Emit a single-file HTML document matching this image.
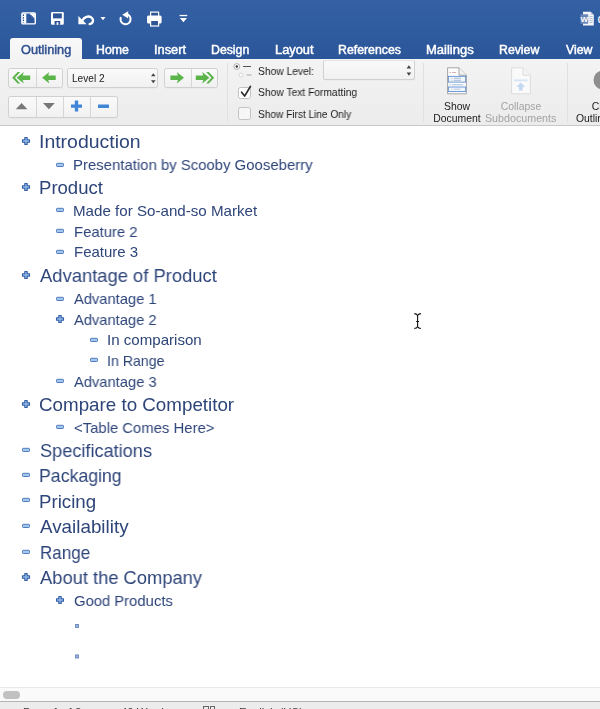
<!DOCTYPE html>
<html><head><meta charset="utf-8">
<style>
*{box-sizing:border-box;margin:0;padding:0}
html,body{width:600px;height:709px;overflow:hidden;background:#fff}
body{position:relative;font-family:"Liberation Sans",sans-serif;}
.abs{position:absolute}
#title{left:0;top:0;width:600px;height:59px;background:linear-gradient(#3561a4 0,#2f5b9f 30px,#2b5699 59px)}
.tab{position:absolute;top:40.500px;height:19px;line-height:19px;font-size:12px;-webkit-text-stroke:0.450px #fff;color:#fff;transform:scaleX(1.025);white-space:nowrap;transform-origin:0 50%;will-change:transform}
#tabsel{left:10px;top:38px;width:72px;height:22px;background:linear-gradient(#f8f8f8,#f3f3f3);border-radius:3px 3px 0 0}
#tabsel span{will-change:transform;position:absolute;left:10.900px;transform:scaleX(1.06);top:2.500px;line-height:19px;font-size:12px;-webkit-text-stroke:0.450px #2f4f8f;color:#2f4f8f;white-space:nowrap;transform-origin:0 50%}
#ribbon{left:0;top:59px;width:600px;height:66.5px;background:linear-gradient(#f3f3f3,#ececec);border-bottom:1px solid #c9c9c9}
.btng{position:absolute;height:20px;border:1px solid #d0d0d0;border-radius:2.5px;background:linear-gradient(#fafafa,#f1f1f1);box-shadow:0 0.5px 0.5px rgba(0,0,0,0.04)}
.vd{position:absolute;top:0;width:1px;height:100%;background:#d6d6d6}
.sep{position:absolute;top:63px;width:1px;height:59px;background:#e1e1e1}
.rl{will-change:transform;position:absolute;transform-origin:0 50%;font-size:10.4px;color:#1a1a1a;white-space:nowrap;line-height:12px}
.cb{position:absolute;z-index:0;width:13.400px;height:12px;border:1px solid #c2c2c2;border-radius:2.5px;background:#fff}
.big{will-change:transform;position:absolute;font-size:10.4px;line-height:11.600px;text-align:center;color:#1a1a1a;white-space:nowrap}
#doc{left:0;top:125.5px;width:600px;height:562.5px;background:#fff}
.h1,.h2,.h3{will-change:transform;position:absolute;white-space:nowrap;color:#2e4579;transform-origin:0 50%}
.h1{left:40.6px;font-size:18.5px;line-height:24px}
.h2{left:74.2px;font-size:15px;line-height:20px}
.h3{left:108.3px;font-size:15px;line-height:20px}
.ic{position:absolute;overflow:visible}
#hs{left:0;top:687px;width:600px;height:14.500px;background:#fafafa;border-top:1px solid #e9e9e9}
#thumb{left:3px;top:691.300px;width:16.600px;height:7.400px;border-radius:3.700px;background:#c1c1c1}
#status{left:0;top:701.400px;width:600px;height:8px;background:#ececec;border-top:1px solid #b4b4b4;overflow:hidden}
#status span{will-change:transform;position:absolute;top:3.600px;font-size:11.400px;line-height:12px;color:#3c3c3c;white-space:nowrap}
</style></head><body>
<div id="title" class="abs"></div>
<svg class="abs" style="left:0;top:0" width="600" height="59" viewBox="0 0 600 59">
<!-- layout icon -->
<rect x="21.900" y="12.900" width="13.400" height="11" rx="1" fill="#3b66ad" stroke="#fff" stroke-width="1.400"/>
<rect x="22.400" y="13.400" width="3.800" height="10" fill="#fff"/>
<path d="M23.500 14.400v8" stroke="#2a4f90" stroke-width="1.100" stroke-dasharray="1.600 0.900"/>
<path d="M27.300 14.800h3.600l3.100 3.100v5h-6.700z" fill="#2d5599"/>
<path d="M30.300 13.300h4.500v4.900h-0.800l-3.700-3.700z" fill="#fff"/>
<path d="M30.900 14.700v3.100h3.100z" fill="#3b66ad"/>
<!-- save icon -->
<rect x="51" y="12" width="12.8" height="12.8" rx="1.2" fill="#fff"/>
<rect x="53" y="13.4" width="8.8" height="5" fill="#2e5596"/>
<rect x="54.6" y="21" width="5.6" height="3.8" fill="#2a4f90"/>
<rect x="56.6" y="22.2" width="1.8" height="2.6" fill="#fff"/>
<!-- undo -->
<path d="M78.400 16v8.200h8.200z" fill="#fff"/>
<path d="M82.3 20.6C84.2 16.6 88.6 15.6 91.2 17.4C94 19.400 93.600 23.200 89.600 24.100" fill="none" stroke="#fff" stroke-width="2.300" stroke-linecap="round"/>
<path d="M100.5 17h5l-2.5 3.2z" fill="#fff"/>
<!-- redo -->
<path d="M126.800 14.300A5 5 0 1 1 120.700 17.900" fill="none" stroke="#fff" stroke-width="2.100" stroke-linecap="round"/>
<path d="M122.200 14.700l6-3.500v7.200z" fill="#fff"/>
<!-- print -->
<rect x="150.6" y="12.1" width="8" height="4.5" fill="#2e5596" stroke="#fff" stroke-width="1.2"/>
<rect x="147" y="15.6" width="14.6" height="8" rx="1.5" fill="#fff"/>
<rect x="150.6" y="20.4" width="8" height="5.6" fill="#2e5596" stroke="#fff" stroke-width="1.2"/>
<!-- customize -->
<rect x="179.6" y="14.9" width="7.6" height="1.3" fill="#fff"/>
<path d="M179.8 18h7.2l-3.6 4.2z" fill="#fff"/>
<!-- word doc icon -->
<path d="M583 11.8h7.6l3.2 3.2v10.4h-10.8z" fill="#f4f6fa"/>
<path d="M590.6 11.8l3.2 3.2h-3.2z" fill="#c9d3e6"/>
<path d="M589.4 16.5h3.2M589.4 18.5h3.2M589.4 20.5h3.2M589.4 22.5h3.2" stroke="#9fb0cf" stroke-width="0.8"/>
<rect x="580.4" y="14.2" width="7.8" height="9.6" rx="0.6" fill="#6b86b8"/>
<text x="584.3" y="22" font-family="Liberation Sans,sans-serif" font-size="8" font-weight="bold" fill="#fff" text-anchor="middle">W</text>
<text x="597.6" y="22.6" font-family="Liberation Sans,sans-serif" font-size="13" fill="#fff">document.docx</text>
</svg>
<div id="tabsel" class="abs"><span>Outlining</span></div>
<span class="tab" style="left:95.7px">Home</span>
<span class="tab" style="left:154.2px;transform:scaleX(1.065)">Insert</span>
<span class="tab" style="left:210.7px">Design</span>
<span class="tab" style="left:275.1px;transform:scaleX(1.07)">Layout</span>
<span class="tab" style="left:338.1px">References</span>
<span class="tab" style="left:426.4px;transform:scaleX(1.085)">Mailings</span>
<span class="tab" style="left:499.1px">Review</span>
<span class="tab" style="left:565.7px">View</span>
<div id="ribbon" class="abs"></div>
<!--RIB-->
<div class="btng" style="left:7.800px;top:67.600px;width:54.800px;height:20.800px"><i class="vd" style="left:26.8px"></i></div>
<div class="btng" style="left:67.400px;top:67.600px;width:91px;height:20.800px"></div>
<div class="btng" style="left:163.500px;top:67.600px;width:54.600px;height:20.800px"><i class="vd" style="left:26px"></i></div>
<div class="btng" style="left:7.800px;top:95.600px;width:109.800px;height:22px"><i class="vd" style="left:26.8px"></i><i class="vd" style="left:53.8px"></i><i class="vd" style="left:81.2px"></i></div>
<div class="rl" style="left:72px;top:72.900px;font-size:10.100px">Level 2</div>
<i class="sep" style="left:227px"></i><i class="sep" style="left:423px"></i><i class="sep" style="left:566.500px"></i>
<div class="btng" style="left:323.300px;top:60.300px;width:91.500px;height:20px;border-top-color:#e4e4e4"></div>
<div class="cb" style="left:238px;top:86.700px;height:12.300px"></div>
<div class="cb" style="left:238px;top:107.200px;height:12.600px;background:#f6f6f6"></div>
<div class="rl" style="left:258.300px;top:65.800px;transform:scaleX(0.986)">Show Level:</div>
<div class="rl" style="left:258.300px;top:87.400px;transform:scaleX(0.988)">Show Text Formatting</div>
<div class="rl" style="left:258.300px;top:108.600px;transform:scaleX(0.972)">Show First Line Only</div>
<div class="big" style="left:426px;top:100.600px;width:62px">Show<br>Document</div>
<div class="big" style="left:480px;top:100.600px;width:82px;color:#a3a3a3">Collapse<br><span style="display:inline-block;transform:scaleX(1.03)">Subdocuments</span></div>
<div class="big" style="left:574px;top:100.600px;width:62px">Close<br>Outline View</div>
<svg class="abs" style="left:0;top:59px" width="600" height="65" viewBox="0 59 600 65">
<g fill="#5bb54a">
<path d="M12.2 77.7L17.6 72H20.2L15.0 77.7L20.2 83.500H17.6Z"/>
<path d="M16.6 77.7L23.8 72L22.7 75.5H30.2V80H22.7L23.8 83.500Z"/>
<path d="M42.1 77.7L49.3 72L48.2 75.5H55.7V80H48.2L49.3 83.500Z"/>
<path d="M184.0 77.7L176.8 72L177.9 75.5H170.4V80H177.9L176.8 83.500Z"/>
<path d="M209.4 77.7L202.2 72L203.3 75.5H195.8V80H203.3L202.2 83.500Z"/>
<path d="M214.2 77.7L208.8 72H206.2L211.4 77.7L206.2 83.500H208.8Z"/>
</g>
<path d="M15.800 109.200l5.800-6.200l5.800 6.200z" fill="#787878"/>
<path d="M43 103h11.800l-5.900 6.300z" fill="#787878"/>
<path d="M74.800 100.600h3.400v3.800h3.800v3.400h-3.800v3.800h-3.400v-3.800h-3.800v-3.400h3.800z" fill="#3f86d6"/>
<rect x="98" y="104.400" width="11" height="3.600" rx="0.500" fill="#3f86d6"/>
<!-- stepper -->
<path d="M151 76.200l2.300-3l2.300 3z M151 80.200h4.600l-2.300 3z" fill="#444"/>
<path d="M406.600 68.500l2.300-3.300l2.300 3.300z M406.600 72.400h4.600l-2.300 3.300z" fill="#444"/>
<!-- show document icon -->
<path d="M447.600 67.800h11.400l7.400 7.400v18.600h-18.800z" fill="#fdfdfd" stroke="#9c9c9c" stroke-width="0.900"/>
<path d="M459 67.800v7.400h7.400" fill="#f3f3f3" stroke="#9c9c9c" stroke-width="0.900"/>
<path d="M449.400 72.500h7.800" stroke="#c9a9a4" stroke-width="0.900" stroke-dasharray="1.600 1 4 1"/>
<rect x="448.300" y="76.300" width="17.400" height="5.800" fill="#f2f7fd" stroke="#4d82cc" stroke-width="0.800"/>
<path d="M451.400 78.200h10M451.400 80.300h10" stroke="#8a9fc0" stroke-width="0.700" stroke-dasharray="1 1.400 6 0"/>
<path d="M449.400 84.800h14" stroke="#a9bddb" stroke-width="1" stroke-dasharray="1.400 1 10 0"/>
<rect x="448.300" y="87" width="17.400" height="4.400" fill="#f2f7fd" stroke="#4d82cc" stroke-width="0.800"/>
<path d="M451.400 89.200h9" stroke="#a3b4d0" stroke-width="0.700" stroke-dasharray="1 1.400 6 0"/>
<!-- collapse icon -->
<path d="M511.600 67.800h11.400l7.400 7.400v18.600h-18.800z" fill="#fafafa" stroke="#d8d8d8" stroke-width="0.900"/>
<path d="M523 67.800v7.400h7.400" fill="#f5f5f5" stroke="#d8d8d8" stroke-width="0.900"/>
<rect x="514" y="79.400" width="13.600" height="2" fill="#d9e6f5"/>
<path d="M520.800 82.600l4.400 4.400h-2.600v3.600h-3.600v-3.600h-2.600z" fill="#c3d8f0"/>
<!-- close icon partial -->
<circle cx="603" cy="80" r="9.500" fill="#8e8e8e"/>
<!-- show level icon -->
<circle cx="236.800" cy="66.500" r="2.900" fill="#fff" stroke="#9a9a9a" stroke-width="0.800"/>
<circle cx="236.800" cy="66.500" r="1.200" fill="#333"/>
<path d="M243 66.500h8" stroke="#555" stroke-width="1"/>
<circle cx="241" cy="75" r="2" fill="#fff" stroke="#c4c4c4" stroke-width="0.700"/>
<path d="M246.500 75h5" stroke="#aaa" stroke-width="1"/>
<!-- check -->
<path d="M241.600 92.200l3 3.900l5.800-9.600" fill="none" stroke="#2d2d2d" stroke-width="1.700" stroke-linecap="round" stroke-linejoin="round"/>
</svg>
<!--/RIB-->
<div id="doc" class="abs"></div>
<!--DOC-->
<svg class="ic" style="left:21.3px;top:136.0px" width="10" height="10" viewBox="0 0 10 10"><path d="M3.800 1.500h2.400v2.300h2.300v2.400h-2.300v2.300h-2.400v-2.300h-2.300v-2.400h2.300z" fill="#8db7e6" stroke="#355fa6" stroke-width="1.100" stroke-linejoin="round"/></svg>
<div class="h1" style="left:38.51px;top:130.2px;transform:scaleX(1.0507)">Introduction</div>
<svg class="ic" style="left:55.2px;top:159.6px" width="10" height="10" viewBox="0 0 10 10"><rect x="1.500" y="3.300" width="7" height="3.200" rx="0.800" fill="#a3c8ee" stroke="#4570b4" stroke-width="0.900"/></svg>
<div class="h2" style="left:72.82px;top:155.1px;transform:scaleX(0.9941)">Presentation by Scooby Gooseberry</div>
<svg class="ic" style="left:21.3px;top:181.7px" width="10" height="10" viewBox="0 0 10 10"><path d="M3.800 1.500h2.400v2.300h2.300v2.400h-2.300v2.300h-2.400v-2.300h-2.300v-2.400h2.300z" fill="#8db7e6" stroke="#355fa6" stroke-width="1.100" stroke-linejoin="round"/></svg>
<div class="h1" style="left:38.81px;top:175.9px;transform:scaleX(1.0029)">Product</div>
<svg class="ic" style="left:55.2px;top:205.3px" width="10" height="10" viewBox="0 0 10 10"><rect x="1.500" y="3.300" width="7" height="3.200" rx="0.800" fill="#a3c8ee" stroke="#4570b4" stroke-width="0.900"/></svg>
<div class="h2" style="left:73.43px;top:200.8px;transform:scaleX(1.0091)">Made for So-and-so Market</div>
<svg class="ic" style="left:55.2px;top:226.3px" width="10" height="10" viewBox="0 0 10 10"><rect x="1.500" y="3.300" width="7" height="3.200" rx="0.800" fill="#a3c8ee" stroke="#4570b4" stroke-width="0.900"/></svg>
<div class="h2" style="left:73.81px;top:221.8px;transform:scaleX(0.9912)">Feature 2</div>
<svg class="ic" style="left:55.2px;top:246.9px" width="10" height="10" viewBox="0 0 10 10"><rect x="1.500" y="3.300" width="7" height="3.200" rx="0.800" fill="#a3c8ee" stroke="#4570b4" stroke-width="0.900"/></svg>
<div class="h2" style="left:73.81px;top:242.4px;transform:scaleX(0.9954)">Feature 3</div>
<svg class="ic" style="left:21.3px;top:270.0px" width="10" height="10" viewBox="0 0 10 10"><path d="M3.800 1.500h2.400v2.300h2.300v2.400h-2.300v2.300h-2.400v-2.300h-2.300v-2.400h2.300z" fill="#8db7e6" stroke="#355fa6" stroke-width="1.100" stroke-linejoin="round"/></svg>
<div class="h1" style="left:39.67px;top:264.2px;transform:scaleX(0.9936)">Advantage of Product</div>
<svg class="ic" style="left:55.2px;top:293.6px" width="10" height="10" viewBox="0 0 10 10"><rect x="1.500" y="3.300" width="7" height="3.200" rx="0.800" fill="#a3c8ee" stroke="#4570b4" stroke-width="0.900"/></svg>
<div class="h2" style="left:73.62px;top:289.1px;transform:scaleX(0.9794)">Advantage 1</div>
<svg class="ic" style="left:55.2px;top:314.1px" width="10" height="10" viewBox="0 0 10 10"><path d="M3.800 1.500h2.400v2.300h2.300v2.400h-2.300v2.300h-2.400v-2.300h-2.300v-2.400h2.300z" fill="#8db7e6" stroke="#355fa6" stroke-width="1.100" stroke-linejoin="round"/></svg>
<div class="h2" style="left:73.77px;top:309.6px;transform:scaleX(0.9793)">Advantage 2</div>
<svg class="ic" style="left:89.2px;top:334.8px" width="10" height="10" viewBox="0 0 10 10"><rect x="1.500" y="3.300" width="7" height="3.200" rx="0.800" fill="#a3c8ee" stroke="#4570b4" stroke-width="0.900"/></svg>
<div class="h3" style="left:107.06px;top:330.3px;transform:scaleX(1.0054)">In comparison</div>
<svg class="ic" style="left:89.2px;top:355.4px" width="10" height="10" viewBox="0 0 10 10"><rect x="1.500" y="3.300" width="7" height="3.200" rx="0.800" fill="#a3c8ee" stroke="#4570b4" stroke-width="0.900"/></svg>
<div class="h3" style="left:106.66px;top:350.9px;transform:scaleX(0.9441)">In Range</div>
<svg class="ic" style="left:55.2px;top:376.2px" width="10" height="10" viewBox="0 0 10 10"><rect x="1.500" y="3.300" width="7" height="3.200" rx="0.800" fill="#a3c8ee" stroke="#4570b4" stroke-width="0.900"/></svg>
<div class="h2" style="left:73.62px;top:371.7px;transform:scaleX(0.9801)">Advantage 3</div>
<svg class="ic" style="left:21.3px;top:398.9px" width="10" height="10" viewBox="0 0 10 10"><path d="M3.800 1.500h2.400v2.300h2.300v2.400h-2.300v2.300h-2.400v-2.300h-2.300v-2.400h2.300z" fill="#8db7e6" stroke="#355fa6" stroke-width="1.100" stroke-linejoin="round"/></svg>
<div class="h1" style="left:39.40px;top:393.1px;transform:scaleX(1.0148)">Compare to Competitor</div>
<svg class="ic" style="left:55.2px;top:422.4px" width="10" height="10" viewBox="0 0 10 10"><rect x="1.500" y="3.300" width="7" height="3.200" rx="0.800" fill="#a3c8ee" stroke="#4570b4" stroke-width="0.900"/></svg>
<div class="h2" style="left:73.63px;top:417.9px;transform:scaleX(0.9904)">&lt;Table Comes Here&gt;</div>
<svg class="ic" style="left:21.3px;top:444.5px" width="10" height="10" viewBox="0 0 10 10"><rect x="1.500" y="3.300" width="7" height="3.200" rx="0.800" fill="#a3c8ee" stroke="#4570b4" stroke-width="0.900"/></svg>
<div class="h1" style="left:39.74px;top:438.7px;transform:scaleX(0.9810)">Specifications</div>
<svg class="ic" style="left:21.3px;top:469.9px" width="10" height="10" viewBox="0 0 10 10"><rect x="1.500" y="3.300" width="7" height="3.200" rx="0.800" fill="#a3c8ee" stroke="#4570b4" stroke-width="0.900"/></svg>
<div class="h1" style="left:39.17px;top:464.1px;transform:scaleX(0.9567)">Packaging</div>
<svg class="ic" style="left:21.3px;top:495.3px" width="10" height="10" viewBox="0 0 10 10"><rect x="1.500" y="3.300" width="7" height="3.200" rx="0.800" fill="#a3c8ee" stroke="#4570b4" stroke-width="0.900"/></svg>
<div class="h1" style="left:39.23px;top:489.5px;transform:scaleX(1.0099)">Pricing</div>
<svg class="ic" style="left:21.3px;top:520.9px" width="10" height="10" viewBox="0 0 10 10"><rect x="1.500" y="3.300" width="7" height="3.200" rx="0.800" fill="#a3c8ee" stroke="#4570b4" stroke-width="0.900"/></svg>
<div class="h1" style="left:39.63px;top:515.1px;transform:scaleX(1.0169)">Availability</div>
<svg class="ic" style="left:21.3px;top:546.5px" width="10" height="10" viewBox="0 0 10 10"><rect x="1.500" y="3.300" width="7" height="3.200" rx="0.800" fill="#a3c8ee" stroke="#4570b4" stroke-width="0.900"/></svg>
<div class="h1" style="left:39.79px;top:540.7px;transform:scaleX(0.9198)">Range</div>
<svg class="ic" style="left:21.3px;top:572.2px" width="10" height="10" viewBox="0 0 10 10"><path d="M3.800 1.500h2.400v2.300h2.300v2.400h-2.300v2.300h-2.400v-2.300h-2.300v-2.400h2.300z" fill="#8db7e6" stroke="#355fa6" stroke-width="1.100" stroke-linejoin="round"/></svg>
<div class="h1" style="left:39.67px;top:566.4px;transform:scaleX(0.9905)">About the Company</div>
<svg class="ic" style="left:55.2px;top:595.4px" width="10" height="10" viewBox="0 0 10 10"><path d="M3.800 1.500h2.400v2.300h2.300v2.400h-2.300v2.300h-2.400v-2.300h-2.300v-2.400h2.300z" fill="#8db7e6" stroke="#355fa6" stroke-width="1.100" stroke-linejoin="round"/></svg>
<div class="h2" style="left:73.63px;top:590.9px;transform:scaleX(0.9874)">Good Products</div>
<svg class="abs" style="left:70px;top:620px" width="14" height="44" viewBox="70 620 14 44"><rect x="75.500" y="624.500" width="3.100" height="3.100" fill="#93b2dc" stroke="#6583b6" stroke-width="0.800"/><rect x="75.500" y="654.900" width="3.100" height="3.100" fill="#93b2dc" stroke="#6583b6" stroke-width="0.800"/></svg>
<svg class="abs" style="left:410px;top:310px" width="16" height="22" viewBox="410 310 16 22"><path d="M414.300 313.600q2.400 0.200 3.300 1.800q0.900-1.600 3.300-1.800M417.600 315.200v11.400M414.300 328.500q2.400-0.200 3.300-1.800q0.900 1.600 3.300 1.800M416.200 321.500h2.800" fill="none" stroke="#111" stroke-width="1.100"/></svg>
<!--/DOC-->
<div id="hs" class="abs"></div><div id="thumb" class="abs"></div>
<div id="status" class="abs"><span style="left:23.200px">Page 1 of 2</span><span style="left:120.600px">40 Words</span><span style="left:239.200px">English (US)</span><i style="position:absolute;left:203px;top:3.400px;width:5.800px;height:8px;border:1px solid #666"></i><i style="position:absolute;left:209.600px;top:3.400px;width:5.800px;height:8px;border:1px solid #666"></i></div>
</body></html>
